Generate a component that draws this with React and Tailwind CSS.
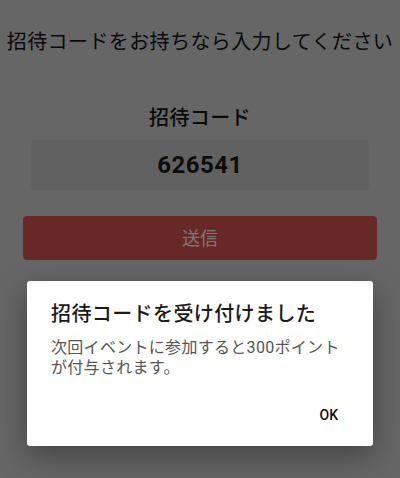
import React from "react";

const font = { fontFamily: "Roboto, 'Noto Sans CJK JP', sans-serif" };

const App = () => {
  return (
    <div className="relative w-[400px] h-[478px] bg-[#666666] overflow-hidden" style={font}>
      {/* page behind the dialog (already dimmed) */}
      <div className="pt-[28px] flex flex-col">
        <h1 className="text-center text-[20px] leading-[28px] tracking-[0.4px] text-[#0a0a0a] whitespace-nowrap">
          招待コードをお持ちなら入力してください
        </h1>
        <div className="mt-[48px] text-center text-[20px] leading-[28px] tracking-[0.4px] font-medium text-[#0a0a0a]">
          招待コード
        </div>
        <div className="mt-[8px] mx-[31px] h-[50px] rounded bg-[#616161] flex items-center justify-center">
          <span className="text-[24px] font-bold text-[#0d0d0d] tracking-[0.5px]">626541</span>
        </div>
        <button className="mt-[26px] mx-[23px] h-[44px] rounded bg-[#692828] text-[18px] text-[#7a7a7a]">
          送信
        </button>
      </div>

      {/* dialog */}
      <div className="absolute left-[27px] top-[281px] w-[346px] h-[165px] bg-white rounded-[3px] shadow-[0_10px_30px_rgba(0,0,0,0.35)] flex flex-col">
        <div className="pt-[19px] pl-[24px] text-[20px] leading-[28px] tracking-[0.4px] font-medium text-[#1a1a1a]">
          招待コードを受け付けました
        </div>
        <p className="mt-[10px] pl-[24px] pr-[10px] text-[16px] leading-[20px] tracking-[0.3px] text-[#555555]">
          次回イベントに参加すると300ポイント
          <br />
          が付与されます。
        </p>
        <div className="mt-[19px] flex justify-end pr-[27px]">
          <button className="h-[36px] px-[8px] text-[14px] font-medium text-[#111111]">OK</button>
        </div>
      </div>
    </div>
  );
};

export default App;
